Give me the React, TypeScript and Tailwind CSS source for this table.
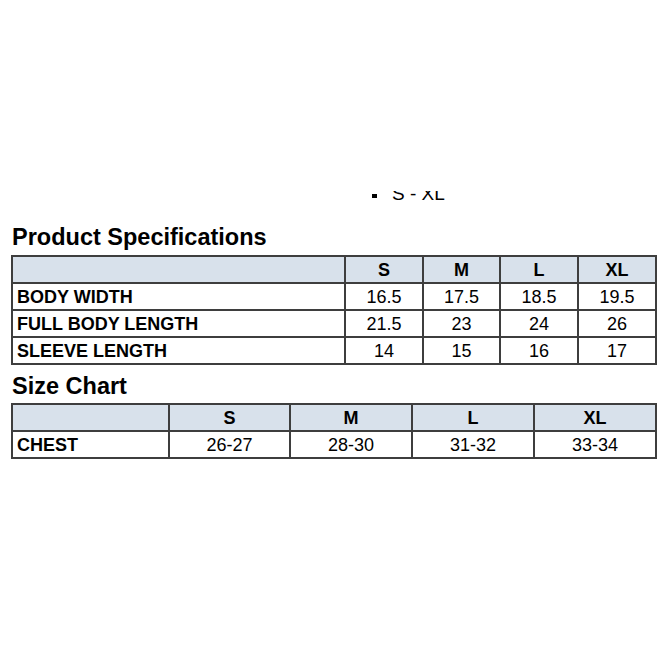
const specCols = ["S", "M", "L", "XL"];

const specRows: [string, string[]][] = [
  ["BODY WIDTH", ["16.5", "17.5", "18.5", "19.5"]],
  ["FULL BODY LENGTH", ["21.5", "23", "24", "26"]],
  ["SLEEVE LENGTH", ["14", "15", "16", "17"]],
];

const chestRow: [string, string[]] = ["CHEST", ["26-27", "28-30", "31-32", "33-34"]];

function Grid({
  cols,
  rows,
  template,
}: {
  cols: string[];
  rows: [string, string[]][];
  template: string;
}) {
  return (
    <div className={`ml-[11px] grid w-[646px] gap-[2px] bg-[#3e3e3e] p-[2px] ${template} auto-rows-[25px]`}>
      <div className="bg-[#d8e1eb]" />
      {cols.map((c) => (
        <div key={c} className="flex items-center justify-center bg-[#d8e1eb] font-bold">
          {c}
        </div>
      ))}
      {rows.map(([label, vals]) => (
        <Row key={label} label={label} vals={vals} />
      ))}
    </div>
  );
}

function Row({ label, vals }: { label: string; vals: string[] }) {
  return (
    <>
      <div className="flex items-center bg-white pl-[4px] font-bold">{label}</div>
      {vals.map((v, i) => (
        <div key={i} className="flex items-center justify-center bg-white">
          {v}
        </div>
      ))}
    </>
  );
}

export default function App() {
  return (
    <div
      className="h-[658px] w-[658px] overflow-hidden bg-white text-[18px] leading-none text-black"
      style={{ fontFamily: '"Liberation Sans", Arial, sans-serif' }}
    >
      {/* leftover bullet from the previous page section, clipped at the top */}
      <div className="mt-[191px] h-[10px] overflow-hidden">
        <div className="-mt-[9px] flex h-[24px] items-center pl-[372px] text-[19px] leading-[24px]">
          <span className="mr-[15px] mt-[4px] inline-block h-[4px] w-[5px] bg-black" />
          <span>S - XL</span>
        </div>
      </div>

      <h2 className="mt-[22px] pl-[12px] text-[23.5px] font-bold leading-[28px]">Product Specifications</h2>
      <div className="mt-[4px]">
        <Grid cols={specCols} rows={specRows} template="grid-cols-[331px_76px_75px_76px_76px]" />
      </div>

      <h2 className="mt-[7px] pl-[12px] text-[23.5px] font-bold leading-[28px]">Size Chart</h2>
      <div className="mt-[3px]">
        <Grid cols={specCols} rows={[chestRow]} template="grid-cols-[155px_119px_120px_120px_120px]" />
      </div>
    </div>
  );
}
